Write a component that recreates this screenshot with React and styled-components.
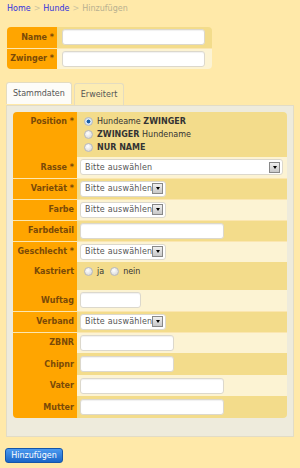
import styled, { createGlobalStyle } from 'styled-components';

const Global = createGlobalStyle`
  html, body {
    margin: 0;
    background: #ffe9a9;
    font-family: "DejaVu Sans", Verdana, sans-serif;
    font-size: 8px;
    color: #333;
  }
`;

const Page = styled.div`
  padding: 3px 5px 0 7px;
`;

const Crumbs = styled.div`
  height: 14px;
  line-height: 12px;
  color: #b8b090;
  a {
    color: #3333dd;
    text-decoration: none;
  }
  span.sep {
    margin: 0 3px;
    color: #ccc4a0;
  }
`;

const FormTable = styled.table`
  border-collapse: collapse;
  table-layout: fixed;
  width: ${(p) => p.$width}px;
  margin: ${(p) => p.$margin || '0'};
  border-radius: 4px;
  overflow: hidden;
`;

const Row = styled.tr`
  height: ${(p) => p.$h || 21}px;
  & + & > * {
    border-top: 1px solid #fbe6b0;
  }
`;

const Label = styled.th`
  width: ${(p) => p.$w}px;
  box-sizing: border-box;
  background: #ffa500;
  color: #7a4a08;
  font-weight: bold;
  text-align: right;
  vertical-align: ${(p) => (p.$top ? 'top' : 'middle')};
  padding: ${(p) => (p.$top ? '5px' : '0')} 3px 0 0;
  white-space: nowrap;
`;

const Value = styled.td`
  background: ${(p) => (p.$dark ? '#f3dc8b' : '#fcf3d3')};
  padding: 0 ${(p) => p.$pr || 4}px 0 ${(p) => p.$pl || 3}px;
  vertical-align: ${(p) => (p.$top ? 'top' : 'middle')};
  ${(p) => p.$top && 'padding-top: 4px;'}
`;

const Input = styled.input`
  display: block;
  box-sizing: border-box;
  width: ${(p) => (p.$w ? `${p.$w}px` : '100%')};
  height: 16px;
  border: 1px solid #dcd8cc;
  border-radius: 3px;
  background: #fff;
  box-shadow: inset 0 1px 1px rgba(0, 0, 0, 0.06);
  padding: 0 4px;
  font: inherit;
`;

const Select = styled.div`
  display: flex;
  align-items: center;
  justify-content: space-between;
  box-sizing: border-box;
  width: ${(p) => (p.$w ? `${p.$w}px` : '100%')};
  height: 16px;
  border: 1px solid #dcd8cc;
  border-radius: 3px;
  background: #fff;
  padding: 0 2px 0 4px;
  color: #555;
  white-space: nowrap;
  letter-spacing: 0.2px;
`;

const DropBtn = styled.span`
  width: 9px;
  height: 9px;
  border: 1px solid #888;
  background: linear-gradient(#f0f0f0, #c8c8c8);
  display: flex;
  align-items: center;
  justify-content: center;
  &::after {
    content: '';
    border-left: 2.5px solid transparent;
    border-right: 2.5px solid transparent;
    border-top: 3px solid #000;
  }
`;

const Radios = styled.div`
  display: flex;
  flex-direction: ${(p) => (p.$inline ? 'row' : 'column')};
  gap: ${(p) => (p.$inline ? '6px' : '3px')};
  padding-left: 4px;
`;

const RadioItem = styled.label`
  display: flex;
  align-items: center;
  gap: 4px;
  height: 10px;
  color: #333;
`;

const Dot = styled.span`
  width: 7px;
  height: 7px;
  border-radius: 50%;
  border: 1px solid #b8b8b8;
  background: ${(p) =>
    p.$on
      ? 'radial-gradient(circle, #1a5fa8 0 1.7px, #d6e6f5 2.2px)'
      : 'radial-gradient(circle at 40% 35%, #fff, #d0d0d0)'};
`;

const Tabs = styled.div`
  display: flex;
  gap: 2px;
  margin: 13px 0 0 -1px;
`;

const Tab = styled.div`
  height: 21px;
  padding: 0 6px;
  display: flex;
  align-items: center;
  border: 1px solid #e4dcc0;
  border-bottom: none;
  border-radius: 3px 3px 0 0;
  background: ${(p) => (p.$active ? '#fdfcf8' : '#fdecb2')};
  color: #555;
  margin-top: ${(p) => (p.$active ? 0 : '1px')};
`;

const Panel = styled.div`
  width: 288px;
  box-sizing: border-box;
  margin-left: -1px;
  background: #eeebdc;
  border: 1px solid #e2dcc6;
  padding: 6px 6px 18px;
`;

const Button = styled.button`
  margin: 11px 0 0 -2px;
  height: 15px;
  width: 58px;
  border: 1px solid #1555a8;
  border-radius: 3px;
  background: linear-gradient(#4b9af0, #1a66c8);
  color: #fff;
  font: inherit;
  padding: 0;
`;

const B = styled.b`
  font-weight: bold;
`;

function Sel({ w }) {
  return (
    <Select $w={w}>
      <span>Bitte auswählen</span>
      <DropBtn />
    </Select>
  );
}

function Radio({ on, children }) {
  return (
    <RadioItem>
      <Dot $on={on} />
      <span>{children}</span>
    </RadioItem>
  );
}

export default function App() {
  const lw = 64;
  return (
    <Page>
      <Global />
      <Crumbs>
        <a href='#'>Home</a>
        <span className='sep'>&gt;</span>
        <a href='#'>Hunde</a>
        <span className='sep'>&gt;</span>
        Hinzufügen
      </Crumbs>

      <FormTable $width={205} $margin='10px 0 0 0'>
        <tbody>
          <Row>
            <Label $w={50}>Name *</Label>
            <Value $dark $pl={5} $pr={7}>
              <Input />
            </Value>
          </Row>
          <Row>
            <Label $w={50}>Zwinger *</Label>
            <Value $pl={5} $pr={7}>
              <Input />
            </Value>
          </Row>
        </tbody>
      </FormTable>

      <Tabs>
        <Tab $active>Stammdaten</Tab>
        <Tab>Erweitert</Tab>
      </Tabs>
      <Panel>
        <FormTable $width={274}>
          <tbody>
            <Row $h={45}>
              <Label $w={lw} $top>Position *</Label>
              <Value $dark $top>
                <Radios>
                  <Radio on>
                    Hundeame <B>ZWINGER</B>
                  </Radio>
                  <Radio>
                    <B>ZWINGER</B> Hundename
                  </Radio>
                  <Radio>
                    <B>NUR NAME</B>
                  </Radio>
                </Radios>
              </Value>
            </Row>
            <Row>
              <Label $w={lw}>Rasse *</Label>
              <Value>
                <Sel />
              </Value>
            </Row>
            <Row>
              <Label $w={lw}>Varietät *</Label>
              <Value $dark>
                <Sel w={86} />
              </Value>
            </Row>
            <Row>
              <Label $w={lw}>Farbe</Label>
              <Value>
                <Sel w={86} />
              </Value>
            </Row>
            <Row>
              <Label $w={lw}>Farbdetail</Label>
              <Value $dark>
                <Input $w={144} />
              </Value>
            </Row>
            <Row>
              <Label $w={lw}>Geschlecht *</Label>
              <Value>
                <Sel w={86} />
              </Value>
            </Row>
            <Row $h={28}>
              <Label $w={lw} $top>Kastriert</Label>
              <Value $dark $top>
                <Radios $inline>
                  <Radio>ja</Radio>
                  <Radio>nein</Radio>
                </Radios>
              </Value>
            </Row>
            <Row>
              <Label $w={lw}>Wuftag</Label>
              <Value>
                <Input $w={61} />
              </Value>
            </Row>
            <Row>
              <Label $w={lw}>Verband</Label>
              <Value $dark>
                <Sel w={86} />
              </Value>
            </Row>
            <Row>
              <Label $w={lw}>ZBNR</Label>
              <Value>
                <Input $w={94} />
              </Value>
            </Row>
            <Row $h={22}>
              <Label $w={lw}>Chipnr</Label>
              <Value $dark>
                <Input $w={94} />
              </Value>
            </Row>
            <Row>
              <Label $w={lw}>Vater</Label>
              <Value>
                <Input $w={144} />
              </Value>
            </Row>
            <Row $h={22}>
              <Label $w={lw}>Mutter</Label>
              <Value $dark>
                <Input $w={144} />
              </Value>
            </Row>
          </tbody>
        </FormTable>
      </Panel>
      <Button>Hinzufügen</Button>
    </Page>
  );
}
